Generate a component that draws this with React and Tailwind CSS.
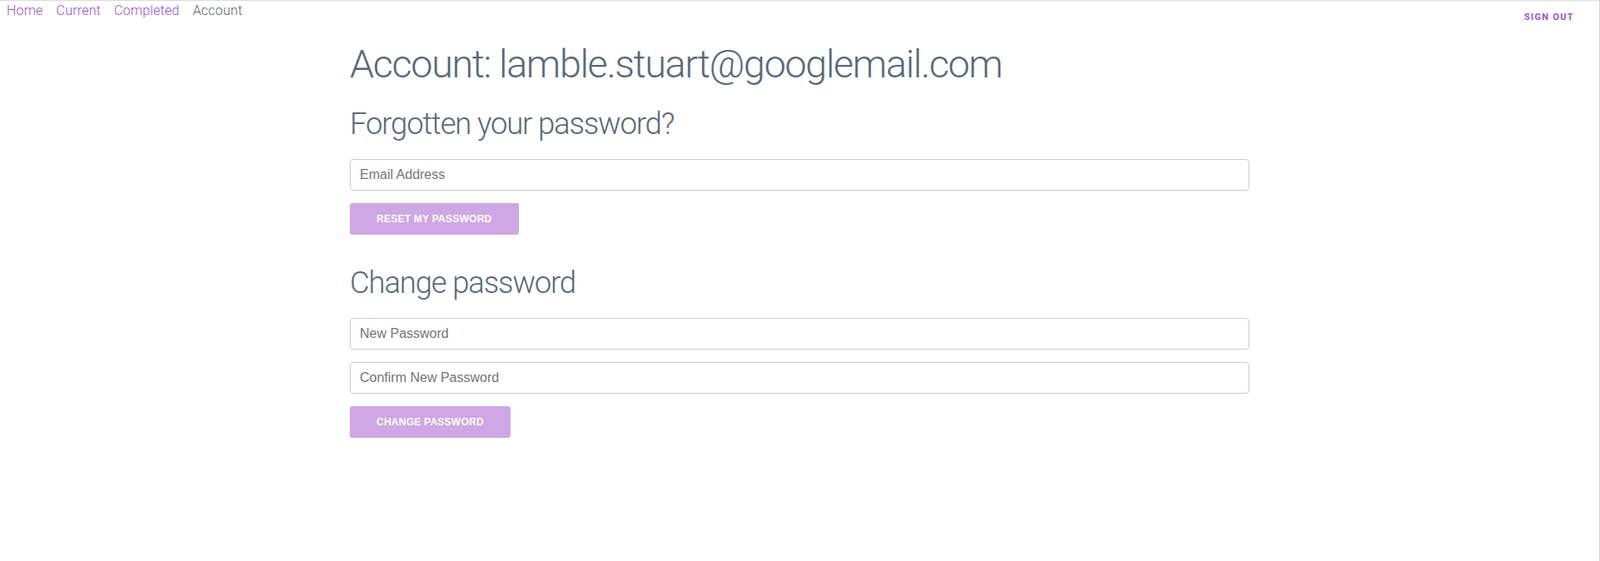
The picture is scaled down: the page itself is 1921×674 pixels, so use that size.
export default function App() {
  const inputCls =
    "block h-[38px] w-full rounded-[4px] border border-[#cccccc] px-[11px] font-['Liberation_Sans',Arial,sans-serif] text-[16px] text-[#333] placeholder:text-[#757575] outline-none";
  return (
    <div className="min-h-[674px] w-full border-t border-r border-t-[#dcdcdc] border-r-[#c8d6df] bg-white font-['Roboto',sans-serif]">
      <header className="flex items-start justify-between">
        <nav className="flex gap-4 pl-2 text-[16px] leading-6 font-light tracking-[0.2px]">
          <a className="text-[#9d4fcf]" href="#">Home</a>
          <a className="text-[#9d4fcf]" href="#">Current</a>
          <a className="text-[#9d4fcf]" href="#">Completed</a>
          <span className="text-[#5b6673]">Account</span>
        </nav>
        <button className="mr-[30px] mt-[14px] text-[11px] leading-[11px] font-bold tracking-[1.3px] text-[#9d4fcf]">
          SIGN OUT
        </button>
      </header>
      <main className="mx-auto mt-[26px] w-[1080px] text-[#58697a]">
        <h1 className="text-[46.72px] leading-[1.1] font-light tracking-[-1.35px]">
          Account: lamble.stuart@googlemail.com
        </h1>
        <h2 className="mt-[26px] text-[36.48px] leading-[1.1] font-light tracking-[-1.15px]">
          Forgotten your password?
        </h2>
        <input className={`mt-[21px] ${inputCls}`} placeholder="Email Address" />
        <button className="mt-[15px] block h-[38px] rounded-[3px] bg-[#cea7e4] px-8 font-['Liberation_Sans',Arial,sans-serif] text-[12px] font-bold tracking-[0.25px] text-white">
          RESET MY PASSWORD
        </button>
        <h2 className="mt-[38px] text-[36.48px] leading-[1.1] font-light tracking-[-1.15px]">
          Change password
        </h2>
        <input className={`mt-[22px] ${inputCls}`} placeholder="New Password" type="password" />
        <input className={`mt-[15px] ${inputCls}`} placeholder="Confirm New Password" type="password" />
        <button className="mt-[15px] block h-[38px] rounded-[3px] bg-[#cea7e4] px-8 font-['Liberation_Sans',Arial,sans-serif] text-[12px] font-bold tracking-[0.25px] text-white">
          CHANGE PASSWORD
        </button>
      </main>
    </div>
  );
}
